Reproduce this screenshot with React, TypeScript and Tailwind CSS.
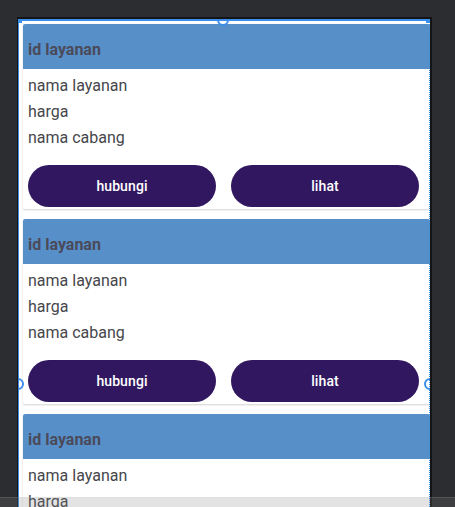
import React from "react";

function Card() {
  return (
    <div className="mb-[10px] w-full bg-white rounded-[2px] shadow-[0_1px_2px_rgba(0,0,0,0.18)]">
      <div className="h-[45px] bg-[#5790c9] pt-[16px] pl-[5px] text-[16px] leading-[19px] font-bold text-[#4a4a5a] rounded-t-[2px]">
        id layanan
      </div>
      <div className="pt-[4px] pl-[5px] text-[16px] leading-[26px] text-[#46464c]">
        <div>nama layanan</div>
        <div>harga</div>
        <div>nama cabang</div>
      </div>
      <div className="flex gap-[15px] pl-[5px] pt-[14px] pb-[2px]">
        <button className="w-[188px] h-[42px] rounded-full bg-[#31175f] text-white text-[14px] font-medium tracking-[0.1px]">
          hubungi
        </button>
        <button className="w-[188px] h-[42px] rounded-full bg-[#31175f] text-white text-[14px] font-medium tracking-[0.1px]">
          lihat
        </button>
      </div>
    </div>
  );
}

export default function App() {
  return (
    <div
      className="relative w-[455px] h-[507px] overflow-hidden bg-[#2b2d30] pt-[17px] pl-[17px]"
      style={{ fontFamily: "Roboto, 'Noto Sans', sans-serif" }}
    >
      <div className="relative w-[415px] h-[490px] border-t-[2px] border-l border-r-[2px] border-[#141517] overflow-hidden">
        <div className="h-full bg-white border-t-[2px] border-l border-[#3b8eea] pt-[3px] pl-[4px] overflow-hidden">
          <Card />
          <Card />
          <Card />
        </div>
        {/* dotted right guide */}
        <div className="absolute top-0 right-0 h-full w-[1px] border-r border-dotted border-[#3b8eea]" />
        {/* corner squares */}
        <div className="absolute top-0 left-0 w-[4px] h-[4px] bg-[#3b8eea]" />
        <div className="absolute top-0 right-0 w-[4px] h-[4px] bg-[#3b8eea]" />
        {/* handles */}
        <div className="absolute left-[199px] top-[-5px] w-[12px] h-[12px] rounded-full border-2 border-[#3b8eea]" />
        <div className="absolute left-[-6px] top-[359px] w-[12px] h-[12px] rounded-full border-2 border-[#3b8eea]" />
        <div className="absolute right-[-6px] top-[359px] w-[12px] h-[12px] rounded-full border-2 border-[#3b8eea]" />
      </div>
      {/* bottom scrollbar overlay */}
      <div className="absolute left-0 bottom-0 w-full h-[10px] bg-[rgba(128,128,128,0.22)] border-t border-[rgba(200,200,200,0.15)]" />
    </div>
  );
}
